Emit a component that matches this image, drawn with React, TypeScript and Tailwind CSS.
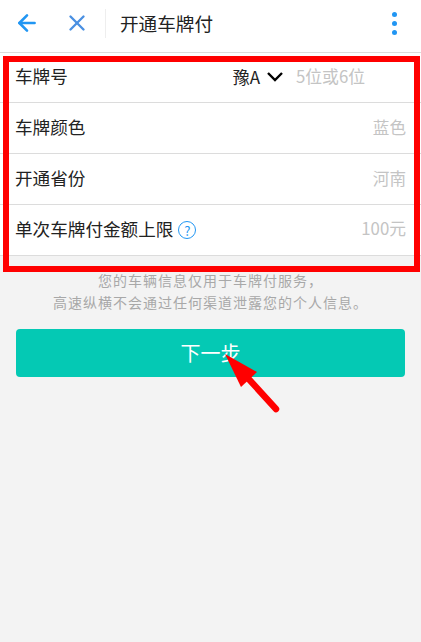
import React from 'react';
import { ArrowLeft, X } from 'lucide-react';

const font = { fontFamily: '"Noto Sans CJK SC", "Noto Sans", sans-serif' };

function Row({ label, children }: { label: React.ReactNode; children: React.ReactNode }) {
  return (
    <div className="flex h-[51px] items-center justify-between border-b border-[#dcdcdc] pb-[2px] pl-[15px] pr-[15px]">
      <div className="flex items-center text-[17.6px] text-[#222]">{label}</div>
      {children}
    </div>
  );
}

export default function App() {
  return (
    <div className="relative h-[642px] w-[421px] overflow-hidden bg-[#f3f3f3]" style={font}>
      {/* Header */}
      <div className="flex h-[53px] items-center border-b border-[#dcdcdc] bg-white pb-[6px]">
        <div className="flex w-[105px] shrink-0 items-center pl-[14px]">
          <ArrowLeft className="h-[26px] w-[26px] text-[#2196f3]" strokeWidth={2.4} />
          <X className="ml-[24px] h-[26px] w-[26px] text-[#4a90e2]" strokeWidth={2.2} />
        </div>
        <div className="h-[29px] w-px bg-[#eeeeee]" />
        <div className="ml-[14px] flex-1 text-[18.6px] text-[#222]">开通车牌付</div>
        <div className="mr-6 flex flex-col gap-[4px]">
          <span className="h-[5px] w-[5px] rounded-full bg-[#2196f3]" />
          <span className="h-[5px] w-[5px] rounded-full bg-[#2196f3]" />
          <span className="h-[5px] w-[5px] rounded-full bg-[#2196f3]" />
        </div>
      </div>

      {/* Form */}
      <div className="bg-white">
        <div className="flex h-[50px] items-center justify-between border-b border-[#dcdcdc] pb-[2px] pl-[15px] pr-[56px]">
          <div className="text-[17.6px] text-[#222]">车牌号</div>
          <div className="flex items-center">
            <span className="text-[17px] text-[#222]">豫A</span>
            <svg className="ml-[7px]" width="16" height="10" viewBox="0 0 16 10" fill="none">
              <polyline points="1,1 8,8 15,1" stroke="#000" strokeWidth="2.4" />
            </svg>
            <span className="ml-[13px] text-[16.8px] text-[#c4c4c4]">5位或6位</span>
          </div>
        </div>
        <Row label="车牌颜色"><span className="text-[16.6px] text-[#c4c4c4]">蓝色</span></Row>
        <Row label="开通省份"><span className="text-[16.6px] text-[#c4c4c4]">河南</span></Row>
        <Row
          label={
            <>
              单次车牌付金额上限
              <span className="ml-[5px] mt-[3px] flex h-[18px] w-[18px] items-center justify-center rounded-full border-[1.5px] border-[#2196f3] text-[13px] leading-none text-[#2196f3]">
                ?
              </span>
            </>
          }
        >
          <span className="text-[16.8px] text-[#c4c4c4]">100元</span>
        </Row>
      </div>

      {/* Note */}
      <div className="mt-[13px] text-center text-[14px] leading-[22px] tracking-[1px] text-[#a8a8a8]">
        <div>您的车辆信息仅用于车牌付服务，</div>
        <div>高速纵横不会通过任何渠道泄露您的个人信息。</div>
      </div>

      {/* Button */}
      <div className="mx-4 mt-[16px] flex h-[48px] items-center justify-center rounded bg-[#04c9b4] text-[20px] text-white">
        下一步
      </div>

      {/* Annotations */}
      <div className="pointer-events-none absolute left-[3px] top-[56px] h-[216px] w-[417px] border-[6px] border-[#ff0000]" />
      <svg className="absolute left-[220px] top-[350px]" width="70" height="70" viewBox="0 0 70 70">
        <polygon points="5,4 37,22 21,37" fill="#ff0000" />
        <line x1="26" y1="26" x2="56" y2="59" stroke="#ff0000" strokeWidth="6.5" strokeLinecap="round" />
      </svg>
    </div>
  );
}
